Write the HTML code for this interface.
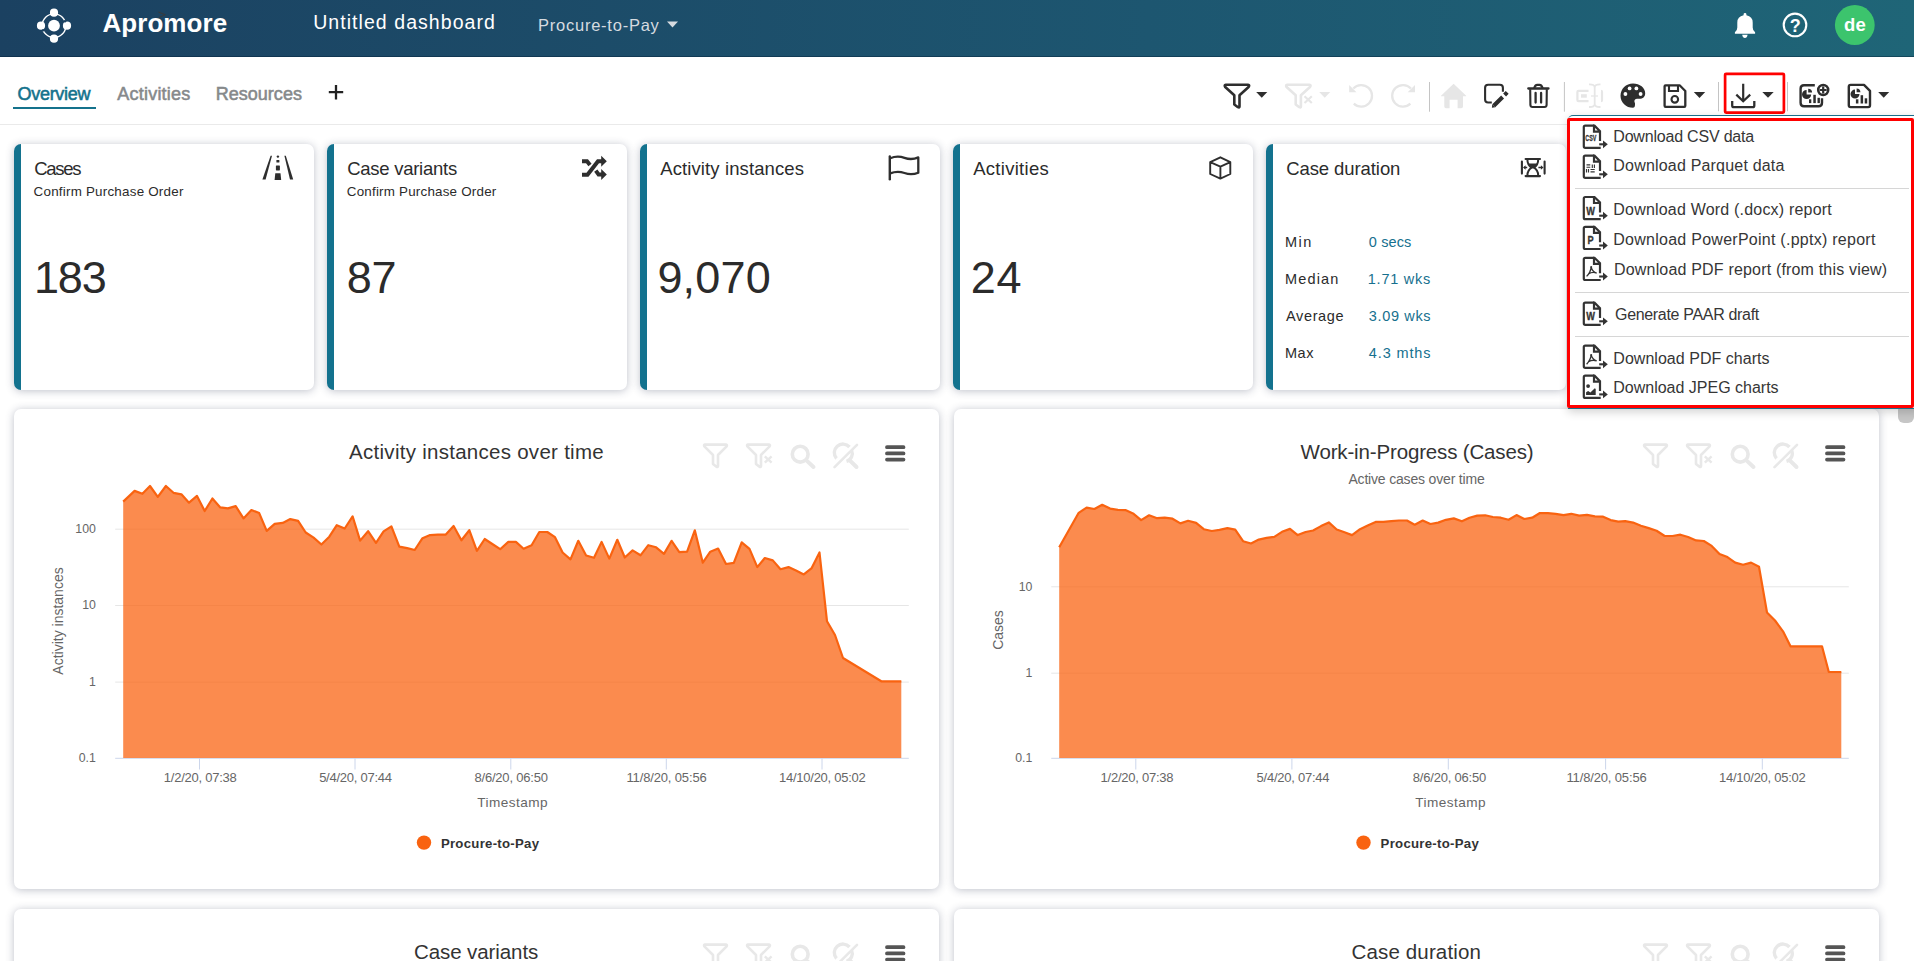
<!DOCTYPE html><html><head><meta charset="utf-8"><style>
*{box-sizing:border-box;margin:0;padding:0}
html,body{width:1914px;height:961px;overflow:hidden;background:#fff;font-family:"Liberation Sans",sans-serif}
.t{position:absolute;white-space:nowrap;line-height:1.117em}
.abs{position:absolute}
.card{position:absolute;background:#fff;border-radius:7px;box-shadow:0 1px 8px rgba(40,50,80,.3)}
.kpi{border-left:7px solid #13728e}
svg{position:absolute;overflow:visible}
</style></head><body>
<div class="abs" style="left:0;top:0;width:1914px;height:57px;background:linear-gradient(90deg,#1b4161 0%,#1d5670 60%,#1f6577 100%)"></div><div class="abs" style="left:0;top:56px;width:1914px;height:1px;background:rgba(0,25,50,.38)"></div>
<svg style="left:0;top:0" width="120" height="56"><g fill="#fff">
<circle cx="54" cy="25.7" r="11.8" fill="none" stroke="#fff" stroke-width="1.4"/>
<circle cx="54" cy="25.7" r="5.9"/>
<circle cx="54" cy="12.7" r="4.1"/><circle cx="54" cy="38.7" r="4.1"/>
<circle cx="41" cy="25.7" r="4.1"/><circle cx="67" cy="25.7" r="4.1"/></g>
<circle cx="64.94" cy="21.28" r="1.3" fill="#1b4161"/><circle cx="43.14" cy="30.31" r="1.3" fill="#1b4161"/></svg>
<div class="t" style="left:102.40px;top:9.27px;font-size:26px;color:#fff;font-weight:700;letter-spacing:0.075px;">Apromore</div>
<svg style="left:0;top:0" width="200" height="30"><path d="M158.3 12 L165.3 14.7 L158.8 17.6" fill="none" stroke="#3a3a3a" stroke-width="1"/></svg>
<div class="t" style="left:313.20px;top:12.45px;font-size:19.5px;color:#fff;font-weight:400;letter-spacing:1.056px;">Untitled dashboard</div>
<div class="t" style="left:538.00px;top:16.27px;font-size:16.5px;color:#d6dbe0;font-weight:400;letter-spacing:0.761px;">Procure-to-Pay</div>
<svg style="left:0;top:0" width="1914" height="56"><path d="M667 21.5 L678 21.5 L672.5 27.5Z" fill="#d6dbe0"/></svg>
<svg style="left:1725px;top:5px" width="160" height="45">
<path d="M9.9 28.8 V27.3 Q12.3 25.8 12.3 22.5 V17.5 Q12.3 11.5 18.6 10.3 V9.3 Q18.6 7.9 20 7.9 Q21.4 7.9 21.4 9.3 V10.3 Q27.7 11.5 27.7 17.5 V22.5 Q27.7 25.8 30.1 27.3 V28.8Z" fill="#fff"/>
<path d="M17.2 29.7 H22.6 Q22 33 19.9 33 Q17.8 33 17.2 29.7Z" fill="#fff"/>
<circle cx="70" cy="19.9" r="11.3" fill="none" stroke="#fff" stroke-width="2.1"/>
<text x="70.2" y="27.2" text-anchor="middle" font-family="Liberation Sans" font-size="18" font-weight="700" fill="#fff">?</text>
<circle cx="129.8" cy="20" r="19.9" fill="#3cc46d"/>
<text x="129.9" y="25.9" text-anchor="middle" font-family="Liberation Sans" font-size="18.5" font-weight="700" fill="#fff">de</text>
</svg>
<div class="t" style="left:17.50px;top:84.21px;font-size:18px;color:#14728c;font-weight:400;letter-spacing:-0.288px;-webkit-text-stroke:0.55px #14728c">Overview</div>
<div class="abs" style="left:13px;top:106.6px;width:83px;height:2.5px;background:#14728c"></div>
<div class="t" style="left:117.30px;top:83.91px;font-size:18px;color:#86898b;font-weight:400;letter-spacing:0.220px;-webkit-text-stroke:0.55px #86898b">Activities</div>
<div class="t" style="left:215.80px;top:83.91px;font-size:18px;color:#86898b;font-weight:400;letter-spacing:0.008px;-webkit-text-stroke:0.55px #86898b">Resources</div>
<svg style="left:0;top:0" width="400" height="124"><path d="M336 85 V99.5 M328.8 92.2 H343.2" stroke="#222" stroke-width="2.3"/></svg>
<div class="abs" style="left:0;top:124px;width:1914px;height:1px;background:#eaeaea"></div>
<svg style="left:0;top:0" width="1914" height="124">
<!-- filter -->
<path d="M1225.8 84.8 H1248 Q1250 85 1248.6 87 L1239.5 95.3 V106.5 Q1239.5 108 1238 107.2 L1234.3 104.5 V95.3 L1225.2 87 Q1224 85 1225.8 84.8Z" fill="none" stroke="#2e2e2e" stroke-width="2.6" stroke-linejoin="round"/>
<path d="M1256.2 92 H1267.3 L1261.75 97.8Z" fill="#2e2e2e"/>
<!-- filter-x disabled -->
<path d="M1287.2 84.8 H1309.4 Q1311.4 85 1310 87 L1300.9 95.3 V106.5 Q1300.9 108 1299.4 107.2 L1295.7 104.5 V95.3 L1286.6 87 Q1285.4 85 1287.2 84.8Z" fill="none" stroke="#e6e6e6" stroke-width="2.6" stroke-linejoin="round"/>
<path d="M1304.5 96.3 L1311.8 103 M1311.8 96.3 L1304.5 103" stroke="#e6e6e6" stroke-width="2.2"/>
<path d="M1319.2 92 H1330.3 L1324.75 97.8Z" fill="#e6e6e6"/>
<!-- undo / redo -->
<path d="M1353.3 88.5 A10.8 10.8 0 1 1 1353.8 103.7" fill="none" stroke="#e6e6e6" stroke-width="2.3"/>
<path d="M1349.2 85 V92.3 H1356.5Z" fill="#e6e6e6"/>
<path d="M1410.9 88.5 A10.8 10.8 0 1 0 1410.4 103.7" fill="none" stroke="#e6e6e6" stroke-width="2.3"/>
<path d="M1415 85 V92.3 H1407.7Z" fill="#e6e6e6"/>
<line x1="1429.5" y1="82" x2="1429.5" y2="111.7" stroke="#c4c4c4" stroke-width="1"/>
<!-- home -->
<path d="M1453.6 83.8 L1441 95.8 V96.2 H1444.3 V106.5 Q1444.3 108.3 1446 108.3 H1449.6 V99.7 H1457.6 V108.3 H1461.2 Q1463 108.3 1463 106.5 V96.2 H1466.2 V95.8Z" fill="#e6e6e6"/>
<!-- edit -->
<path d="M1502.9 91.8 V87.7 Q1502.9 84.7 1499.9 84.7 H1488.1 Q1485.1 84.7 1485.1 87.7 V99.5 Q1485.1 102.5 1488.1 102.5 H1491.8" fill="none" stroke="#2e2e2e" stroke-width="2.1"/>
<path d="M1493.8 105.8 L1502.6 97 M1504.6 95 L1507.2 92.4" stroke="#2e2e2e" stroke-width="4.1" stroke-linecap="butt"/>
<path d="M1491.9 107.7 L1492.3 104.3 L1495.3 107.3Z" fill="#2e2e2e"/>
<!-- trash -->
<path d="M1528.3 88.5 H1548.5" stroke="#2e2e2e" stroke-width="2.3" stroke-linecap="round"/>
<path d="M1534.1 88.5 Q1535 84.9 1537.3 84.9 H1539.5 Q1541.8 84.9 1542.7 88.5" fill="none" stroke="#2e2e2e" stroke-width="2.1"/>
<path d="M1530.2 89.2 L1530.4 105 Q1530.5 107 1532.5 107 H1544.5 Q1546.5 107 1546.6 105 L1546.8 89.2" fill="none" stroke="#2e2e2e" stroke-width="2.1"/>
<path d="M1535.6 93 V102.6 M1541.1 93 V102.6" stroke="#2e2e2e" stroke-width="2.3" stroke-linecap="round"/>
<line x1="1564.4" y1="82" x2="1564.4" y2="111.7" stroke="#c4c4c4" stroke-width="1"/>
<!-- disabled text-in-box -->
<path d="M1588.5 90.9 H1578.5 Q1577.4 90.9 1577.4 92 V100 Q1577.4 101.1 1578.5 101.1 H1588.5 M1601 90.9 Q1602 90.9 1602 92 V100 Q1602 101.1 1601 101.1" fill="none" stroke="#e6e6e6" stroke-width="2.2"/>
<rect x="1581" y="94.2" width="5.8" height="3.5" fill="#e6e6e6"/>
<path d="M1591 96 H1598" stroke="#e6e6e6" stroke-width="1.3"/>
<path d="M1594.7 86 V105.5 M1589 84.4 Q1594.7 84.2 1594.7 87.5 Q1594.7 84.2 1600.5 84.4 M1589 107 Q1594.7 107.2 1594.7 104 Q1594.7 107.2 1600.5 107" fill="none" stroke="#e6e6e6" stroke-width="1.8"/>
<!-- palette -->
<path d="M1633 83.6 C1639.8 83.6 1645.2 88 1645.2 93.3 C1645.2 97 1642.8 98.8 1639.5 98.8 H1637 C1635.4 98.8 1634.4 100 1634.4 101.2 C1634.4 102.2 1635 102.6 1635 103.6 C1635 104.8 1635.3 107.8 1633 107.8 C1626 107.8 1620.5 102.4 1620.5 95.7 C1620.5 89 1626 83.6 1633 83.6Z" fill="#2e2e2e"/>
<circle cx="1625.4" cy="94" r="1.9" fill="#fff"/><circle cx="1629.6" cy="88.4" r="1.9" fill="#fff"/>
<circle cx="1636.4" cy="88.4" r="1.9" fill="#fff"/><circle cx="1640.6" cy="94" r="1.9" fill="#fff"/>
<!-- save -->
<path d="M1664.6 86.3 Q1664.6 85.3 1665.6 85.3 H1679.6 L1685.3 91 V105.8 Q1685.3 106.9 1684.3 106.9 H1665.6 Q1664.6 106.9 1664.6 105.8Z" fill="none" stroke="#2e2e2e" stroke-width="2.3" stroke-linejoin="round"/>
<path d="M1669 85.5 V91 H1678 V85.5" fill="none" stroke="#2e2e2e" stroke-width="2.1"/>
<circle cx="1674.8" cy="99.3" r="3.3" fill="none" stroke="#2e2e2e" stroke-width="2.1"/>
<path d="M1693.8 92 H1705.2 L1699.5 98.1Z" fill="#2e2e2e"/>
<line x1="1718.5" y1="82" x2="1718.5" y2="111.3" stroke="#c4c4c4" stroke-width="1"/>
<!-- download -->
<path d="M1743.2 83.8 V101 M1736.3 94.6 L1743.2 101.3 L1750.2 94.6" fill="none" stroke="#2e2e2e" stroke-width="2.2"/>
<path d="M1732.2 100.9 V105.5 Q1732.2 107.2 1733.9 107.2 H1752.6 Q1754.3 107.2 1754.3 105.5 V100.9" fill="none" stroke="#2e2e2e" stroke-width="2.3"/>
<path d="M1762.3 92 H1773.7 L1768 97.8Z" fill="#2e2e2e"/>
<rect x="1725.1" y="73.8" width="58.8" height="38.8" rx="1" fill="none" stroke="#f00" stroke-width="2.7"/>
<line x1="1787.5" y1="82" x2="1787.5" y2="111.3" stroke="#c4c4c4" stroke-width="1"/>
<!-- chart plus -->
<path d="M1814.8 85.3 H1804 Q1800.6 85.3 1800.6 88.7 V102.8 Q1800.6 106.3 1804 106.3 H1818.6 Q1822 106.3 1822 102.8 V98.3" fill="none" stroke="#2e2e2e" stroke-width="2.4"/>
<path d="M1806.6 89.9 A4.6 4.6 0 1 0 1811.2 94.5 H1806.6Z" fill="#2e2e2e"/>
<path d="M1808.2 88.7 A3.9 3.9 0 0 1 1812.1 92.6 H1808.2Z" fill="#2e2e2e"/>
<rect x="1809" y="99.3" width="2.3" height="3.8" fill="#2e2e2e"/><rect x="1813.3" y="94.8" width="2.5" height="8.3" fill="#2e2e2e"/><rect x="1817.5" y="97.8" width="2.4" height="5.3" fill="#2e2e2e"/>
<circle cx="1823.2" cy="90" r="4.95" fill="#fff" stroke="#2e2e2e" stroke-width="2.6"/>
<path d="M1823.2 86.6 V93.4 M1819.8 90 H1826.6" stroke="#2e2e2e" stroke-width="2.2"/>
<!-- chart doc -->
<path d="M1848.8 86.7 Q1848.8 84.9 1850.6 84.9 H1864 L1870 90.8 V105.3 Q1870 107.1 1868.2 107.1 H1850.6 Q1848.8 107.1 1848.8 105.3Z" fill="none" stroke="#2e2e2e" stroke-width="2.4" stroke-linejoin="round"/>
<path d="M1855 89.6 A4.5 4.5 0 1 0 1859.5 94.1 H1855Z" fill="#2e2e2e"/>
<path d="M1856.6 88.4 A3.8 3.8 0 0 1 1860.4 92.2 H1856.6Z" fill="#2e2e2e"/>
<rect x="1855.9" y="99.3" width="2.5" height="4.2" fill="#2e2e2e"/><rect x="1860.6" y="95.2" width="2.5" height="8.3" fill="#2e2e2e"/><rect x="1864.7" y="98.3" width="2.5" height="5.2" fill="#2e2e2e"/>
<path d="M1878.2 92 H1889.2 L1883.7 97.8Z" fill="#2e2e2e"/>
</svg>
<div class="card kpi" style="left:14px;top:144px;width:300px;height:246px"></div>
<div class="card kpi" style="left:327px;top:144px;width:300px;height:246px"></div>
<div class="card kpi" style="left:640px;top:144px;width:300px;height:246px"></div>
<div class="card kpi" style="left:953px;top:144px;width:300px;height:246px"></div>
<div class="card kpi" style="left:1266px;top:144px;width:300px;height:246px"></div>
<div class="card kpi" style="left:1579px;top:144px;width:300px;height:246px"></div>
<div class="t" style="left:34.20px;top:159.46px;font-size:18.5px;color:#2b2b2b;font-weight:400;letter-spacing:-1.297px;">Cases</div>
<div class="t" style="left:347.20px;top:159.46px;font-size:18.5px;color:#2b2b2b;font-weight:400;letter-spacing:-0.263px;">Case variants</div>
<div class="t" style="left:660.20px;top:159.46px;font-size:18.5px;color:#2b2b2b;font-weight:400;letter-spacing:0.110px;">Activity instances</div>
<div class="t" style="left:973.20px;top:159.46px;font-size:18.5px;color:#2b2b2b;font-weight:400;letter-spacing:0.285px;">Activities</div>
<div class="t" style="left:1286.20px;top:159.46px;font-size:18.5px;color:#2b2b2b;font-weight:400;letter-spacing:-0.083px;">Case duration</div>
<div class="t" style="left:33.60px;top:185.07px;font-size:13.4px;color:#2b2b2b;font-weight:400;letter-spacing:0.221px;">Confirm Purchase Order</div>
<div class="t" style="left:346.80px;top:185.07px;font-size:13.4px;color:#2b2b2b;font-weight:400;letter-spacing:0.207px;">Confirm Purchase Order</div>
<div class="t" style="left:33.90px;top:253.47px;font-size:45px;color:#2b2b2b;font-weight:400;letter-spacing:-1.077px;">183</div>
<div class="t" style="left:346.80px;top:253.47px;font-size:45px;color:#2b2b2b;font-weight:400;letter-spacing:-0.227px;">87</div>
<div class="t" style="left:657.40px;top:253.47px;font-size:45px;color:#2b2b2b;font-weight:400;letter-spacing:0.204px;">9,070</div>
<div class="t" style="left:970.80px;top:253.47px;font-size:45px;color:#2b2b2b;font-weight:400;letter-spacing:0.773px;">24</div>
<div class="t" style="left:1285.00px;top:234.28px;font-size:14.5px;color:#2b2b2b;font-weight:400;letter-spacing:1.450px;">Min</div>
<div class="t" style="left:1368.80px;top:234.28px;font-size:14.5px;color:#16708e;font-weight:400;letter-spacing:0.129px;">0 secs</div>
<div class="t" style="left:1285.00px;top:271.38px;font-size:14.5px;color:#2b2b2b;font-weight:400;letter-spacing:1.141px;">Median</div>
<div class="t" style="left:1367.80px;top:271.38px;font-size:14.5px;color:#16708e;font-weight:400;letter-spacing:0.747px;">1.71 wks</div>
<div class="t" style="left:1286.00px;top:307.88px;font-size:14.5px;color:#2b2b2b;font-weight:400;letter-spacing:0.637px;">Average</div>
<div class="t" style="left:1368.80px;top:307.88px;font-size:14.5px;color:#16708e;font-weight:400;letter-spacing:0.647px;">3.09 wks</div>
<div class="t" style="left:1285.00px;top:344.98px;font-size:14.5px;color:#2b2b2b;font-weight:400;letter-spacing:0.529px;">Max</div>
<div class="t" style="left:1368.80px;top:344.98px;font-size:14.5px;color:#16708e;font-weight:400;letter-spacing:0.878px;">4.3 mths</div>
<svg style="left:0;top:0" width="1914" height="400">
<path d="M270.6 155.8 L272 155.8 L265.6 179.6 L262.4 179.6Z" fill="#2e2e2e"/>
<path d="M284.4 155.8 L285.8 155.8 L293.2 179.6 L290 179.6Z" fill="#2e2e2e"/>
<circle cx="277.9" cy="156.6" r="1.2" fill="#2e2e2e"/>
<rect x="276.4" y="160" width="3" height="2.6" rx=".5" fill="#2e2e2e"/>
<rect x="275.9" y="165.4" width="4" height="5" rx=".6" fill="#2e2e2e"/>
<path d="M275.3 173.3 H280.5 L281.2 180 H274.6Z" fill="#2e2e2e"/>
<!-- shuffle -->
<path d="M582 161.2 H587 L590 165 M582 174.7 H587.5 L598 161.2 H603" fill="none" stroke="#2e2e2e" stroke-width="4"/>
<path d="M595.8 170.6 L598.6 174.6 H603" fill="none" stroke="#2e2e2e" stroke-width="4"/>
<path d="M601.2 155.8 L606.8 161.3 L601.2 166.8Z M601.2 169.1 L606.8 174.6 L601.2 180.1Z" fill="#2e2e2e"/>
<!-- flag -->
<path d="M889.8 156.5 V179.3" stroke="#2e2e2e" stroke-width="2.4" stroke-linecap="round"/>
<path d="M890.2 158.2 C895 156.2 900 156.2 904.5 157.8 C909 159.5 913.5 159.5 918.3 157.4 V172.7 C913.5 174.6 909 174.6 904.5 173 C900 171.4 895 171.4 890.2 173.4" fill="none" stroke="#2e2e2e" stroke-width="2.3" stroke-linejoin="round"/>
<!-- cube -->
<path d="M1220.4 157.3 L1230.3 162.2 V174 L1220.4 178.6 L1210.2 174 V162.2Z M1210.2 162.2 L1220.4 166.6 L1230.3 162.2 M1220.4 166.6 V178.6" fill="none" stroke="#2e2e2e" stroke-width="1.9" stroke-linejoin="round"/>
<!-- hourglass -->
<path d="M1521.9 161.6 V173.6 M1544.6 161.6 V173.6" stroke="#2e2e2e" stroke-width="2.1" stroke-linecap="round"/>
<path d="M1525.6 159.05 H1540 M1525.6 176.1 H1540" stroke="#2e2e2e" stroke-width="2.1" stroke-linecap="round"/>
<path d="M1527.4 159.5 Q1527.4 165 1531.6 167.6 Q1527.4 170.2 1527.4 175.5 M1538.2 159.5 Q1538.2 165 1534 167.6 Q1538.2 170.2 1538.2 175.5" fill="none" stroke="#2e2e2e" stroke-width="2"/>
<path d="M1528 163.6 H1537.6 Q1536.4 166.6 1533.8 168.2 H1531.8 Q1529.2 166.6 1528 163.6Z" fill="#2e2e2e"/>
<path d="M1527.2 167.5 H1524.5 M1538.4 167.5 H1541.3" stroke="#2e2e2e" stroke-width="1.6"/>
<path d="M1523 167.5 L1525.6 165.3 V169.7Z M1543.5 167.5 L1540.9 165.3 V169.7Z" fill="#2e2e2e"/>
</svg>
<div class="card" style="left:14px;top:408.7px;width:925px;height:480.4px"></div>
<div class="card" style="left:954px;top:408.7px;width:925px;height:480.4px"></div>
<div class="card" style="left:14px;top:908.8px;width:925px;height:480.4px"></div>
<div class="card" style="left:954px;top:908.8px;width:925px;height:480.4px"></div>
<svg style="left:0;top:0" width="1914" height="961">
<line x1="115.2" y1="529.2" x2="908.8" y2="529.2" stroke="#e6e6e6" stroke-width="1"/>
<line x1="115.2" y1="605.5" x2="908.8" y2="605.5" stroke="#e6e6e6" stroke-width="1"/>
<line x1="115.2" y1="682.1" x2="908.8" y2="682.1" stroke="#e6e6e6" stroke-width="1"/>
<line x1="115.2" y1="758.3" x2="908.8" y2="758.3" stroke="#ccd6eb" stroke-width="1"/>
<line x1="199.5" y1="758.3" x2="199.5" y2="769.5" stroke="#ccd6eb" stroke-width="1"/>
<line x1="355" y1="758.3" x2="355" y2="769.5" stroke="#ccd6eb" stroke-width="1"/>
<line x1="510.8" y1="758.3" x2="510.8" y2="769.5" stroke="#ccd6eb" stroke-width="1"/>
<line x1="666.3" y1="758.3" x2="666.3" y2="769.5" stroke="#ccd6eb" stroke-width="1"/>
<line x1="822" y1="758.3" x2="822" y2="769.5" stroke="#ccd6eb" stroke-width="1"/>
<polygon points="123.2,501.6 134.6,490.9 142.4,493.8 150.0,486.0 157.8,496.9 165.9,486.0 173.5,492.8 181.4,494.3 189.0,502.7 197.0,495.9 204.7,511.0 212.4,498.5 220.3,507.4 227.9,508.4 235.7,506.1 243.5,518.4 251.4,510.0 259.2,513.1 266.7,530.9 274.7,523.9 282.7,522.9 290.3,519.1 298.1,520.9 305.7,532.5 313.6,537.7 321.4,544.5 329.3,536.7 336.8,525.2 344.7,528.5 352.6,516.3 360.1,540.6 368.1,531.2 376.0,542.9 383.6,531.4 391.4,526.4 399.3,546.6 407.1,548.1 414.7,550.0 422.5,538.2 430.1,535.1 437.9,534.6 445.8,534.6 453.6,526.0 461.4,540.3 469.3,530.2 476.9,550.8 484.7,539.0 492.3,544.0 500.2,549.2 508.3,541.9 515.9,541.9 523.6,548.7 531.6,545.2 539.3,532.0 547.3,532.0 555.0,537.2 562.6,552.5 570.5,559.4 578.3,540.8 586.1,555.5 594.0,557.8 601.6,541.9 609.3,558.6 617.3,539.8 624.8,557.5 632.6,550.4 640.5,555.3 648.3,545.2 656.1,547.3 664.0,553.9 671.6,540.8 679.3,552.1 687.1,551.7 694.8,530.3 702.8,562.7 710.3,551.7 718.1,548.6 726.0,564.0 733.8,562.9 741.7,542.3 749.5,548.9 757.3,567.1 764.8,558.0 772.8,560.4 780.5,569.2 788.5,567.1 796.0,570.5 803.8,574.4 811.7,568.1 819.5,552.5 827.0,621.3 835.0,635.0 843.0,658.0 881.3,681.3 901.3,681.3 901.3,758.0 123.2,758.0" fill="rgba(249,99,16,0.74)"/>
<polyline points="123.2,501.6 134.6,490.9 142.4,493.8 150.0,486.0 157.8,496.9 165.9,486.0 173.5,492.8 181.4,494.3 189.0,502.7 197.0,495.9 204.7,511.0 212.4,498.5 220.3,507.4 227.9,508.4 235.7,506.1 243.5,518.4 251.4,510.0 259.2,513.1 266.7,530.9 274.7,523.9 282.7,522.9 290.3,519.1 298.1,520.9 305.7,532.5 313.6,537.7 321.4,544.5 329.3,536.7 336.8,525.2 344.7,528.5 352.6,516.3 360.1,540.6 368.1,531.2 376.0,542.9 383.6,531.4 391.4,526.4 399.3,546.6 407.1,548.1 414.7,550.0 422.5,538.2 430.1,535.1 437.9,534.6 445.8,534.6 453.6,526.0 461.4,540.3 469.3,530.2 476.9,550.8 484.7,539.0 492.3,544.0 500.2,549.2 508.3,541.9 515.9,541.9 523.6,548.7 531.6,545.2 539.3,532.0 547.3,532.0 555.0,537.2 562.6,552.5 570.5,559.4 578.3,540.8 586.1,555.5 594.0,557.8 601.6,541.9 609.3,558.6 617.3,539.8 624.8,557.5 632.6,550.4 640.5,555.3 648.3,545.2 656.1,547.3 664.0,553.9 671.6,540.8 679.3,552.1 687.1,551.7 694.8,530.3 702.8,562.7 710.3,551.7 718.1,548.6 726.0,564.0 733.8,562.9 741.7,542.3 749.5,548.9 757.3,567.1 764.8,558.0 772.8,560.4 780.5,569.2 788.5,567.1 796.0,570.5 803.8,574.4 811.7,568.1 819.5,552.5 827.0,621.3 835.0,635.0 843.0,658.0 881.3,681.3 901.3,681.3" fill="none" stroke="#f96310" stroke-width="2.2" stroke-linejoin="round"/>
</svg>
<svg style="left:0;top:0" width="1914" height="961">
<line x1="1051.25" y1="586.8" x2="1848.8" y2="586.8" stroke="#e6e6e6" stroke-width="1"/>
<line x1="1051.25" y1="673.2" x2="1848.8" y2="673.2" stroke="#e6e6e6" stroke-width="1"/>
<line x1="1051.25" y1="758.3" x2="1848.8" y2="758.3" stroke="#ccd6eb" stroke-width="1"/>
<line x1="1135.8" y1="758.3" x2="1135.8" y2="769.5" stroke="#ccd6eb" stroke-width="1"/>
<line x1="1291.9" y1="758.3" x2="1291.9" y2="769.5" stroke="#ccd6eb" stroke-width="1"/>
<line x1="1448.3" y1="758.3" x2="1448.3" y2="769.5" stroke="#ccd6eb" stroke-width="1"/>
<line x1="1605.6" y1="758.3" x2="1605.6" y2="769.5" stroke="#ccd6eb" stroke-width="1"/>
<line x1="1762.3" y1="758.3" x2="1762.3" y2="769.5" stroke="#ccd6eb" stroke-width="1"/>
<polygon points="1059.2,547.3 1078.7,512.8 1086.6,507.6 1094.4,509.0 1102.2,504.8 1110.1,508.6 1117.9,509.9 1125.4,510.1 1133.6,513.8 1141.1,520.1 1149.1,515.3 1157.1,518.2 1164.7,517.7 1172.5,518.7 1180.4,523.4 1188.1,520.8 1196.1,522.9 1203.8,529.2 1211.8,531.0 1219.5,529.9 1227.4,528.1 1235.2,529.7 1243.1,541.2 1251.0,543.5 1258.8,539.6 1266.6,537.9 1274.3,536.8 1282.0,531.8 1290.0,528.9 1297.7,535.1 1305.6,532.0 1313.1,530.5 1321.0,526.1 1328.8,522.4 1336.7,529.5 1344.5,532.3 1352.0,535.1 1360.0,529.2 1367.7,525.5 1375.6,521.9 1383.4,521.9 1391.3,521.1 1399.0,520.5 1407.0,520.5 1414.7,524.7 1422.7,520.5 1430.4,524.0 1438.2,522.6 1445.9,519.8 1453.8,518.4 1461.9,521.3 1469.5,517.7 1477.2,515.6 1485.2,515.3 1492.9,517.0 1500.8,517.7 1508.6,519.8 1516.5,515.1 1524.3,519.0 1532.2,517.7 1539.9,513.0 1547.9,513.2 1555.6,513.8 1563.5,515.1 1571.3,513.8 1579.2,515.6 1587.0,514.9 1594.9,516.3 1602.6,516.6 1610.6,520.1 1618.3,521.6 1625.2,521.1 1633.1,522.6 1640.9,525.7 1648.7,528.1 1656.6,530.8 1664.7,536.0 1672.5,536.0 1680.4,534.7 1688.1,537.0 1696.1,540.4 1703.8,541.0 1711.7,545.9 1719.5,553.9 1727.4,557.1 1735.2,562.6 1743.1,564.7 1751.1,562.6 1759.0,566.8 1767.0,612.5 1775.0,620.5 1783.0,631.3 1790.5,646.3 1822.0,646.3 1828.8,672.0 1841.3,672.0 1841.3,758.0 1059.2,758.0" fill="rgba(249,99,16,0.74)"/>
<polyline points="1059.2,547.3 1078.7,512.8 1086.6,507.6 1094.4,509.0 1102.2,504.8 1110.1,508.6 1117.9,509.9 1125.4,510.1 1133.6,513.8 1141.1,520.1 1149.1,515.3 1157.1,518.2 1164.7,517.7 1172.5,518.7 1180.4,523.4 1188.1,520.8 1196.1,522.9 1203.8,529.2 1211.8,531.0 1219.5,529.9 1227.4,528.1 1235.2,529.7 1243.1,541.2 1251.0,543.5 1258.8,539.6 1266.6,537.9 1274.3,536.8 1282.0,531.8 1290.0,528.9 1297.7,535.1 1305.6,532.0 1313.1,530.5 1321.0,526.1 1328.8,522.4 1336.7,529.5 1344.5,532.3 1352.0,535.1 1360.0,529.2 1367.7,525.5 1375.6,521.9 1383.4,521.9 1391.3,521.1 1399.0,520.5 1407.0,520.5 1414.7,524.7 1422.7,520.5 1430.4,524.0 1438.2,522.6 1445.9,519.8 1453.8,518.4 1461.9,521.3 1469.5,517.7 1477.2,515.6 1485.2,515.3 1492.9,517.0 1500.8,517.7 1508.6,519.8 1516.5,515.1 1524.3,519.0 1532.2,517.7 1539.9,513.0 1547.9,513.2 1555.6,513.8 1563.5,515.1 1571.3,513.8 1579.2,515.6 1587.0,514.9 1594.9,516.3 1602.6,516.6 1610.6,520.1 1618.3,521.6 1625.2,521.1 1633.1,522.6 1640.9,525.7 1648.7,528.1 1656.6,530.8 1664.7,536.0 1672.5,536.0 1680.4,534.7 1688.1,537.0 1696.1,540.4 1703.8,541.0 1711.7,545.9 1719.5,553.9 1727.4,557.1 1735.2,562.6 1743.1,564.7 1751.1,562.6 1759.0,566.8 1767.0,612.5 1775.0,620.5 1783.0,631.3 1790.5,646.3 1822.0,646.3 1828.8,672.0 1841.3,672.0" fill="none" stroke="#f96310" stroke-width="2.2" stroke-linejoin="round"/>
</svg>
<div class="t" style="left:349.10px;top:440.75px;font-size:20.5px;color:#333;font-weight:400;letter-spacing:0.273px;">Activity instances over time</div>
<div class="t" style="left:75.32px;top:522.57px;font-size:12.3px;color:#666666;font-weight:400;letter-spacing:0.000px;">100</div>
<div class="t" style="left:82.16px;top:599.07px;font-size:12.3px;color:#666666;font-weight:400;letter-spacing:0.000px;">10</div>
<div class="t" style="left:89.00px;top:676.17px;font-size:12.3px;color:#666666;font-weight:400;letter-spacing:0.000px;">1</div>
<div class="t" style="left:78.74px;top:752.37px;font-size:12.3px;color:#666666;font-weight:400;letter-spacing:0.000px;">0.1</div>
<div class="t" style="left:58.5px;top:621.2px;font-size:14px;color:#666666;transform:translate(-50%,-50%) rotate(-90deg);transform-origin:center">Activity instances</div>
<div class="t" style="left:163.85px;top:770.63px;font-size:13px;color:#666666;font-weight:400;letter-spacing:-0.247px;">1/2/20, 07:38</div>
<div class="t" style="left:319.15px;top:770.63px;font-size:13px;color:#666666;font-weight:400;letter-spacing:-0.247px;">5/4/20, 07:44</div>
<div class="t" style="left:474.45px;top:770.63px;font-size:13px;color:#666666;font-weight:400;letter-spacing:-0.197px;">8/6/20, 06:50</div>
<div class="t" style="left:626.50px;top:770.63px;font-size:13px;color:#666666;font-weight:400;letter-spacing:-0.149px;">11/8/20, 05:56</div>
<div class="t" style="left:779.05px;top:770.63px;font-size:13px;color:#666666;font-weight:400;letter-spacing:-0.259px;">14/10/20, 05:02</div>
<div class="t" style="left:477.30px;top:795.09px;font-size:13.6px;color:#666666;font-weight:400;letter-spacing:0.455px;">Timestamp</div>
<svg style="left:0;top:0" width="1914" height="961"><circle cx="424" cy="842.6" r="7.2" fill="#f96310"/></svg>
<div class="t" style="left:440.90px;top:837.45px;font-size:13.2px;color:#333;font-weight:700;letter-spacing:0.277px;">Procure-to-Pay</div>
<div class="t" style="left:1300.60px;top:440.75px;font-size:20.5px;color:#333;font-weight:400;letter-spacing:-0.153px;">Work-in-Progress (Cases)</div>
<div class="t" style="left:1018.66px;top:581.27px;font-size:12.3px;color:#666666;font-weight:400;letter-spacing:0.000px;">10</div>
<div class="t" style="left:1025.50px;top:666.67px;font-size:12.3px;color:#666666;font-weight:400;letter-spacing:0.000px;">1</div>
<div class="t" style="left:1015.24px;top:752.07px;font-size:12.3px;color:#666666;font-weight:400;letter-spacing:0.000px;">0.1</div>
<div class="t" style="left:998.5px;top:630.4px;font-size:14px;color:#666666;transform:translate(-50%,-50%) rotate(-90deg);transform-origin:center">Cases</div>
<div class="t" style="left:1100.55px;top:770.63px;font-size:13px;color:#666666;font-weight:400;letter-spacing:-0.247px;">1/2/20, 07:38</div>
<div class="t" style="left:1256.55px;top:770.63px;font-size:13px;color:#666666;font-weight:400;letter-spacing:-0.247px;">5/4/20, 07:44</div>
<div class="t" style="left:1412.75px;top:770.63px;font-size:13px;color:#666666;font-weight:400;letter-spacing:-0.197px;">8/6/20, 06:50</div>
<div class="t" style="left:1566.50px;top:770.63px;font-size:13px;color:#666666;font-weight:400;letter-spacing:-0.149px;">11/8/20, 05:56</div>
<div class="t" style="left:1719.05px;top:770.63px;font-size:13px;color:#666666;font-weight:400;letter-spacing:-0.259px;">14/10/20, 05:02</div>
<div class="t" style="left:1415.30px;top:795.09px;font-size:13.6px;color:#666666;font-weight:400;letter-spacing:0.455px;">Timestamp</div>
<svg style="left:0;top:0" width="1914" height="961"><circle cx="1363.5" cy="842.6" r="7.2" fill="#f96310"/></svg>
<div class="t" style="left:1380.60px;top:837.45px;font-size:13.2px;color:#333;font-weight:700;letter-spacing:0.277px;">Procure-to-Pay</div>
<div class="t" style="left:1348.40px;top:471.83px;font-size:14px;color:#666666;font-weight:400;letter-spacing:-0.174px;">Active cases over time</div>
<svg style="left:0px;top:0px" width="960" height="961">
<path d="M704.8 444.6 H726 Q727.5 444.8 726.6 446.3 L718 455 V466 Q718 467.5 716.5 466.8 L713 464 V455 L704.4 446.3 Q703.6 444.8 704.8 444.6Z" fill="none" stroke="#e8e8e8" stroke-width="2.6" stroke-linejoin="round"/>
<path d="M747.8 444.6 H769 Q770.5 444.8 769.6 446.3 L761 455 V466 Q761 467.5 759.5 466.8 L756 464 V455 L747.4 446.3 Q746.6 444.8 747.8 444.6Z" fill="none" stroke="#e8e8e8" stroke-width="2.6" stroke-linejoin="round"/>
<path d="M764.8 456.3 L771.6 462.7 M771.6 456.3 L764.8 462.7" stroke="#e8e8e8" stroke-width="2.4"/>
<circle cx="800.2" cy="454.2" r="7.9" fill="none" stroke="#e8e8e8" stroke-width="3.6"/>
<path d="M806.4 460.4 L813.5 467" stroke="#e8e8e8" stroke-width="4" stroke-linecap="round"/>
<path d="M836.5 458.5 A7.9 7.9 0 0 1 849.5 447 M851.6 450.5 A7.9 7.9 0 0 1 846.5 461.3" fill="none" stroke="#e8e8e8" stroke-width="3.4"/>
<path d="M850 460.6 L856.5 467" stroke="#e8e8e8" stroke-width="4" stroke-linecap="round"/>
<path d="M834.5 467.2 L857 444.8" stroke="#e8e8e8" stroke-width="2.6" stroke-linecap="round"/>
<path d="M887 447.2 H903.5 M887 453.4 H903.5 M887 459.6 H903.5" stroke="#555" stroke-width="3.8" stroke-linecap="round"/>
</svg>
<svg style="left:940px;top:0px" width="960" height="961">
<path d="M704.8 444.6 H726 Q727.5 444.8 726.6 446.3 L718 455 V466 Q718 467.5 716.5 466.8 L713 464 V455 L704.4 446.3 Q703.6 444.8 704.8 444.6Z" fill="none" stroke="#e8e8e8" stroke-width="2.6" stroke-linejoin="round"/>
<path d="M747.8 444.6 H769 Q770.5 444.8 769.6 446.3 L761 455 V466 Q761 467.5 759.5 466.8 L756 464 V455 L747.4 446.3 Q746.6 444.8 747.8 444.6Z" fill="none" stroke="#e8e8e8" stroke-width="2.6" stroke-linejoin="round"/>
<path d="M764.8 456.3 L771.6 462.7 M771.6 456.3 L764.8 462.7" stroke="#e8e8e8" stroke-width="2.4"/>
<circle cx="800.2" cy="454.2" r="7.9" fill="none" stroke="#e8e8e8" stroke-width="3.6"/>
<path d="M806.4 460.4 L813.5 467" stroke="#e8e8e8" stroke-width="4" stroke-linecap="round"/>
<path d="M836.5 458.5 A7.9 7.9 0 0 1 849.5 447 M851.6 450.5 A7.9 7.9 0 0 1 846.5 461.3" fill="none" stroke="#e8e8e8" stroke-width="3.4"/>
<path d="M850 460.6 L856.5 467" stroke="#e8e8e8" stroke-width="4" stroke-linecap="round"/>
<path d="M834.5 467.2 L857 444.8" stroke="#e8e8e8" stroke-width="2.6" stroke-linecap="round"/>
<path d="M887 447.2 H903.5 M887 453.4 H903.5 M887 459.6 H903.5" stroke="#555" stroke-width="3.8" stroke-linecap="round"/>
</svg>
<svg style="left:0px;top:500.1px" width="960" height="961">
<path d="M704.8 444.6 H726 Q727.5 444.8 726.6 446.3 L718 455 V466 Q718 467.5 716.5 466.8 L713 464 V455 L704.4 446.3 Q703.6 444.8 704.8 444.6Z" fill="none" stroke="#e8e8e8" stroke-width="2.6" stroke-linejoin="round"/>
<path d="M747.8 444.6 H769 Q770.5 444.8 769.6 446.3 L761 455 V466 Q761 467.5 759.5 466.8 L756 464 V455 L747.4 446.3 Q746.6 444.8 747.8 444.6Z" fill="none" stroke="#e8e8e8" stroke-width="2.6" stroke-linejoin="round"/>
<path d="M764.8 456.3 L771.6 462.7 M771.6 456.3 L764.8 462.7" stroke="#e8e8e8" stroke-width="2.4"/>
<circle cx="800.2" cy="454.2" r="7.9" fill="none" stroke="#e8e8e8" stroke-width="3.6"/>
<path d="M806.4 460.4 L813.5 467" stroke="#e8e8e8" stroke-width="4" stroke-linecap="round"/>
<path d="M836.5 458.5 A7.9 7.9 0 0 1 849.5 447 M851.6 450.5 A7.9 7.9 0 0 1 846.5 461.3" fill="none" stroke="#e8e8e8" stroke-width="3.4"/>
<path d="M850 460.6 L856.5 467" stroke="#e8e8e8" stroke-width="4" stroke-linecap="round"/>
<path d="M834.5 467.2 L857 444.8" stroke="#e8e8e8" stroke-width="2.6" stroke-linecap="round"/>
<path d="M887 447.2 H903.5 M887 453.4 H903.5 M887 459.6 H903.5" stroke="#555" stroke-width="3.8" stroke-linecap="round"/>
</svg>
<svg style="left:940px;top:500.1px" width="960" height="961">
<path d="M704.8 444.6 H726 Q727.5 444.8 726.6 446.3 L718 455 V466 Q718 467.5 716.5 466.8 L713 464 V455 L704.4 446.3 Q703.6 444.8 704.8 444.6Z" fill="none" stroke="#e8e8e8" stroke-width="2.6" stroke-linejoin="round"/>
<path d="M747.8 444.6 H769 Q770.5 444.8 769.6 446.3 L761 455 V466 Q761 467.5 759.5 466.8 L756 464 V455 L747.4 446.3 Q746.6 444.8 747.8 444.6Z" fill="none" stroke="#e8e8e8" stroke-width="2.6" stroke-linejoin="round"/>
<path d="M764.8 456.3 L771.6 462.7 M771.6 456.3 L764.8 462.7" stroke="#e8e8e8" stroke-width="2.4"/>
<circle cx="800.2" cy="454.2" r="7.9" fill="none" stroke="#e8e8e8" stroke-width="3.6"/>
<path d="M806.4 460.4 L813.5 467" stroke="#e8e8e8" stroke-width="4" stroke-linecap="round"/>
<path d="M836.5 458.5 A7.9 7.9 0 0 1 849.5 447 M851.6 450.5 A7.9 7.9 0 0 1 846.5 461.3" fill="none" stroke="#e8e8e8" stroke-width="3.4"/>
<path d="M850 460.6 L856.5 467" stroke="#e8e8e8" stroke-width="4" stroke-linecap="round"/>
<path d="M834.5 467.2 L857 444.8" stroke="#e8e8e8" stroke-width="2.6" stroke-linecap="round"/>
<path d="M887 447.2 H903.5 M887 453.4 H903.5 M887 459.6 H903.5" stroke="#555" stroke-width="3.8" stroke-linecap="round"/>
</svg>
<div class="t" style="left:414.00px;top:940.75px;font-size:20.5px;color:#333;font-weight:400;letter-spacing:-0.090px;">Case variants</div>
<div class="t" style="left:1351.50px;top:940.75px;font-size:20.5px;color:#333;font-weight:400;letter-spacing:0.147px;">Case duration</div>
<div class="abs" style="left:1898.3px;top:406px;width:15.7px;height:16.5px;border-radius:0 0 6px 6px;background:#c6c6c6"></div>
<div class="abs" style="left:1567.5px;top:115px;width:352px;height:294px;background:#fff;border-top:1.2px solid #1a6f8a;border-bottom:1.2px solid #1a6f8a;border-radius:5px 5px 0 0;box-shadow:0 3px 10px rgba(0,0,0,.18)"></div>
<div class="abs" style="left:1575px;top:187.9px;width:334px;height:1px;background:#d6d6d6"></div>
<div class="abs" style="left:1575px;top:292.1px;width:334px;height:1px;background:#d6d6d6"></div>
<div class="abs" style="left:1575px;top:336.4px;width:334px;height:1px;background:#d6d6d6"></div>
<svg style="left:0;top:0" width="1914" height="420"><path d="M1594 125.6 H1585.3 Q1583.8 125.6 1583.8 127.1 V146.29999999999998 Q1583.8 147.79999999999998 1585.3 147.79999999999998 H1600.7" fill="none" stroke="#333" stroke-width="2.2"/>
<path d="M1593 125.6 H1594.5 L1600 131.1 V141.0 M1594 125.6 V131.6 H1600" fill="none" stroke="#333" stroke-width="2.2"/>
<path d="M1599.2 144.29999999999998 H1603.6" stroke="#333" stroke-width="2.1"/>
<path d="M1603 140.4 L1607.8 144.29999999999998 L1603 148.2Z" fill="#333"/>
<text x="0" y="0" text-anchor="middle" font-family="Liberation Sans" font-weight="700" font-size="9" fill="#333" stroke="#333" stroke-width="0.25" transform="translate(1590.8 141) scale(0.6 1)">CSV</text>
<path d="M1594 155.6 H1585.3 Q1583.8 155.6 1583.8 157.1 V176.29999999999998 Q1583.8 177.79999999999998 1585.3 177.79999999999998 H1600.7" fill="none" stroke="#333" stroke-width="2.2"/>
<path d="M1593 155.6 H1594.5 L1600 161.1 V171.0 M1594 155.6 V161.6 H1600" fill="none" stroke="#333" stroke-width="2.2"/>
<path d="M1599.2 174.29999999999998 H1603.6" stroke="#333" stroke-width="2.1"/>
<path d="M1603 170.4 L1607.8 174.29999999999998 L1603 178.2Z" fill="#333"/>
<path d="M1586.5 164.9 H1590.3 M1586.5 167.2 H1590.3 M1592.3 164.4 V168 M1594.4 164.4 V168 M1586.5 168.9 V172.6 M1588.5 168.9 V172.6 M1590.5 169.5 H1594.7 M1590.5 171.8 H1594.7" stroke="#333" stroke-width="1.15"/>
<path d="M1594 197 H1585.3 Q1583.8 197 1583.8 198.5 V217.7 Q1583.8 219.2 1585.3 219.2 H1600.7" fill="none" stroke="#333" stroke-width="2.2"/>
<path d="M1593 197 H1594.5 L1600 202.5 V212.4 M1594 197 V203 H1600" fill="none" stroke="#333" stroke-width="2.2"/>
<path d="M1599.2 215.7 H1603.6" stroke="#333" stroke-width="2.1"/>
<path d="M1603 211.8 L1607.8 215.7 L1603 219.6Z" fill="#333"/>
<text x="0" y="0" text-anchor="middle" font-family="Liberation Sans" font-weight="700" font-size="11.5" fill="#333" stroke="#333" stroke-width="0.35" transform="translate(1590.6 214.6) scale(0.8 1)">W</text>
<path d="M1594 226.8 H1585.3 Q1583.8 226.8 1583.8 228.3 V247.5 Q1583.8 249.0 1585.3 249.0 H1600.7" fill="none" stroke="#333" stroke-width="2.2"/>
<path d="M1593 226.8 H1594.5 L1600 232.3 V242.20000000000002 M1594 226.8 V232.8 H1600" fill="none" stroke="#333" stroke-width="2.2"/>
<path d="M1599.2 245.5 H1603.6" stroke="#333" stroke-width="2.1"/>
<path d="M1603 241.60000000000002 L1607.8 245.5 L1603 249.4Z" fill="#333"/>
<text x="0" y="0" text-anchor="middle" font-family="Liberation Sans" font-weight="700" font-size="11.5" fill="#333" stroke="#333" stroke-width="0.35" transform="translate(1590.6 244.4) scale(0.8 1)">P</text>
<path d="M1594 257.8 H1585.3 Q1583.8 257.8 1583.8 259.3 V278.5 Q1583.8 280.0 1585.3 280.0 H1600.7" fill="none" stroke="#333" stroke-width="2.2"/>
<path d="M1593 257.8 H1594.5 L1600 263.3 V273.2 M1594 257.8 V263.8 H1600" fill="none" stroke="#333" stroke-width="2.2"/>
<path d="M1599.2 276.5 H1603.6" stroke="#333" stroke-width="2.1"/>
<path d="M1603 272.6 L1607.8 276.5 L1603 280.40000000000003Z" fill="#333"/>
<path d="M1591.2 267.1 Q1590.6 272.3 1586.6 276.40000000000003 M1591.2 267.1 Q1592.4 271.8 1596.7 273.1 M1588.5 274.0 Q1592.5 271.40000000000003 1596.7 273.1" fill="none" stroke="#333" stroke-width="1.3"/><circle cx="1591.2" cy="267.1" r="1" fill="#333"/>
<path d="M1594 302.6 H1585.3 Q1583.8 302.6 1583.8 304.1 V323.3 Q1583.8 324.8 1585.3 324.8 H1600.7" fill="none" stroke="#333" stroke-width="2.2"/>
<path d="M1593 302.6 H1594.5 L1600 308.1 V318.0 M1594 302.6 V308.6 H1600" fill="none" stroke="#333" stroke-width="2.2"/>
<path d="M1599.2 321.3 H1603.6" stroke="#333" stroke-width="2.1"/>
<path d="M1603 317.40000000000003 L1607.8 321.3 L1603 325.20000000000005Z" fill="#333"/>
<text x="0" y="0" text-anchor="middle" font-family="Liberation Sans" font-weight="700" font-size="11.5" fill="#333" stroke="#333" stroke-width="0.35" transform="translate(1590.6 320.20000000000005) scale(0.8 1)">W</text>
<path d="M1594 345.6 H1585.3 Q1583.8 345.6 1583.8 347.1 V366.3 Q1583.8 367.8 1585.3 367.8 H1600.7" fill="none" stroke="#333" stroke-width="2.2"/>
<path d="M1593 345.6 H1594.5 L1600 351.1 V361.0 M1594 345.6 V351.6 H1600" fill="none" stroke="#333" stroke-width="2.2"/>
<path d="M1599.2 364.3 H1603.6" stroke="#333" stroke-width="2.1"/>
<path d="M1603 360.40000000000003 L1607.8 364.3 L1603 368.20000000000005Z" fill="#333"/>
<path d="M1591.2 354.90000000000003 Q1590.6 360.1 1586.6 364.20000000000005 M1591.2 354.90000000000003 Q1592.4 359.6 1596.7 360.90000000000003 M1588.5 361.8 Q1592.5 359.20000000000005 1596.7 360.90000000000003" fill="none" stroke="#333" stroke-width="1.3"/><circle cx="1591.2" cy="354.90000000000003" r="1" fill="#333"/>
<path d="M1594 375.7 H1585.3 Q1583.8 375.7 1583.8 377.2 V396.4 Q1583.8 397.9 1585.3 397.9 H1600.7" fill="none" stroke="#333" stroke-width="2.2"/>
<path d="M1593 375.7 H1594.5 L1600 381.2 V391.09999999999997 M1594 375.7 V381.7 H1600" fill="none" stroke="#333" stroke-width="2.2"/>
<path d="M1599.2 394.4 H1603.6" stroke="#333" stroke-width="2.1"/>
<path d="M1603 390.5 L1607.8 394.4 L1603 398.3Z" fill="#333"/>
<circle cx="1588.1" cy="386.1" r="1.9" fill="#333"/><path d="M1586.1 395 V392.3 L1588.1 390.9 L1590.4 392.6 L1594.8 388.2 L1595.7 389 V395Z" fill="#333"/></svg>
<div class="t" style="left:1613.30px;top:127.62px;font-size:16px;color:#363636;font-weight:400;letter-spacing:-0.199px;">Download CSV data</div>
<div class="t" style="left:1613.30px;top:157.22px;font-size:16px;color:#363636;font-weight:400;letter-spacing:0.194px;">Download Parquet data</div>
<div class="t" style="left:1613.30px;top:201.02px;font-size:16px;color:#363636;font-weight:400;letter-spacing:0.197px;">Download Word (.docx) report</div>
<div class="t" style="left:1613.30px;top:230.82px;font-size:16px;color:#363636;font-weight:400;letter-spacing:0.260px;">Download PowerPoint (.pptx) report</div>
<div class="t" style="left:1614.00px;top:261.32px;font-size:16px;color:#363636;font-weight:400;letter-spacing:0.180px;">Download PDF report (from this view)</div>
<div class="t" style="left:1615.00px;top:306.22px;font-size:16px;color:#363636;font-weight:400;letter-spacing:-0.320px;">Generate PAAR draft</div>
<div class="t" style="left:1613.30px;top:349.82px;font-size:16px;color:#363636;font-weight:400;letter-spacing:0.032px;">Download PDF charts</div>
<div class="t" style="left:1613.30px;top:379.42px;font-size:16px;color:#363636;font-weight:400;letter-spacing:-0.006px;">Download JPEG charts</div>
<div class="abs" style="left:1567.3px;top:117.5px;width:346.7px;height:290.6px;border:3.3px solid #f00;border-radius:2px"></div>
</body></html>
